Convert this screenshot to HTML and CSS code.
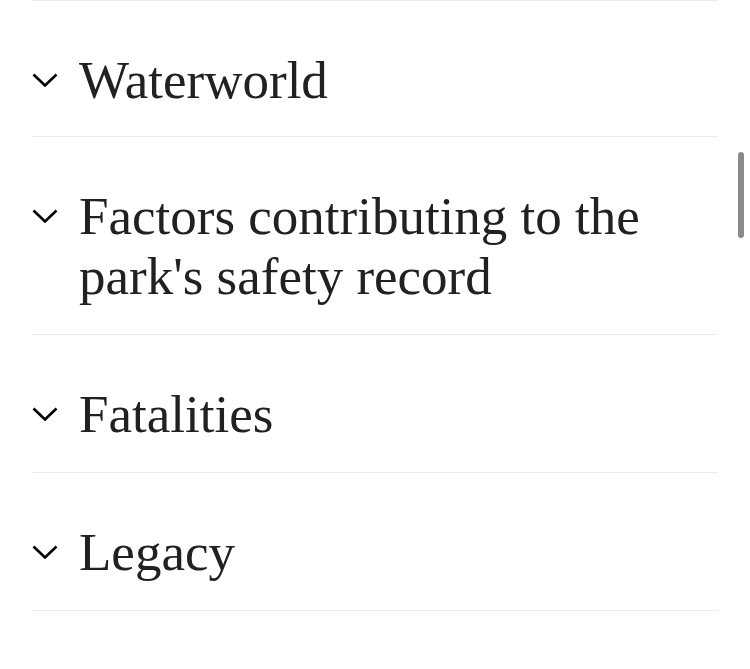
FILE: index.html
```html
<!DOCTYPE html>
<html lang="en">
<head>
  <meta charset="UTF-8" />
  <meta name="viewport" content="width=device-width, initial-scale=1.0"/>
  <title>Sections</title>
  <link rel="stylesheet" href="styles.css">
</head>
<body>
  <div class="sections">
    <div class="section">
      <span class="chevron"><svg viewBox="0 0 26 14"><path d="M1.5 1.5 L13 12.5 L24.5 1.5"/></svg></span>
      <h2>Waterworld</h2>
    </div>
    <div class="section">
      <span class="chevron"><svg viewBox="0 0 26 14"><path d="M1.5 1.5 L13 12.5 L24.5 1.5"/></svg></span>
      <h2>Factors contributing to the park's safety record</h2>
    </div>
    <div class="section">
      <span class="chevron"><svg viewBox="0 0 26 14"><path d="M1.5 1.5 L13 12.5 L24.5 1.5"/></svg></span>
      <h2>Fatalities</h2>
    </div>
    <div class="section">
      <span class="chevron"><svg viewBox="0 0 26 14"><path d="M1.5 1.5 L13 12.5 L24.5 1.5"/></svg></span>
      <h2>Legacy</h2>
    </div>
  </div>
  <div class="scroll-thumb"></div>
</body>
</html>
```

FILE: styles.css
```css
body {
  margin: 0;
  background: #fff;
  font-family: "Liberation Serif", "Times New Roman", serif;
  color: #202122;
  overflow: hidden;
}

.sections {
  padding: 0 32px;
}

.sections::before {
  content: "";
  display: block;
  height: 1px;
  background: #eaecf0;
}

.section {
  display: flex;
  align-items: flex-start;
  gap: 19px;
  padding: 49px 0 28px;
  border-bottom: 1px solid #eaecf0;
}

.section:first-child {
  padding-bottom: 26px;
}

.chevron {
  flex: 0 0 28px;
  height: 60px;
  display: flex;
  align-items: center;
}

.chevron svg {
  width: 26px;
  height: 14px;
  fill: none;
  stroke: #000;
  stroke-width: 2.6;
}

h2 {
  margin: 0;
  font-size: 53px;
  font-weight: normal;
  line-height: 60px;
}

.scroll-thumb {
  position: absolute;
  top: 152px;
  right: 6px;
  width: 6px;
  height: 86px;
  border-radius: 3px;
  background: #8a8a8a;
}
```
